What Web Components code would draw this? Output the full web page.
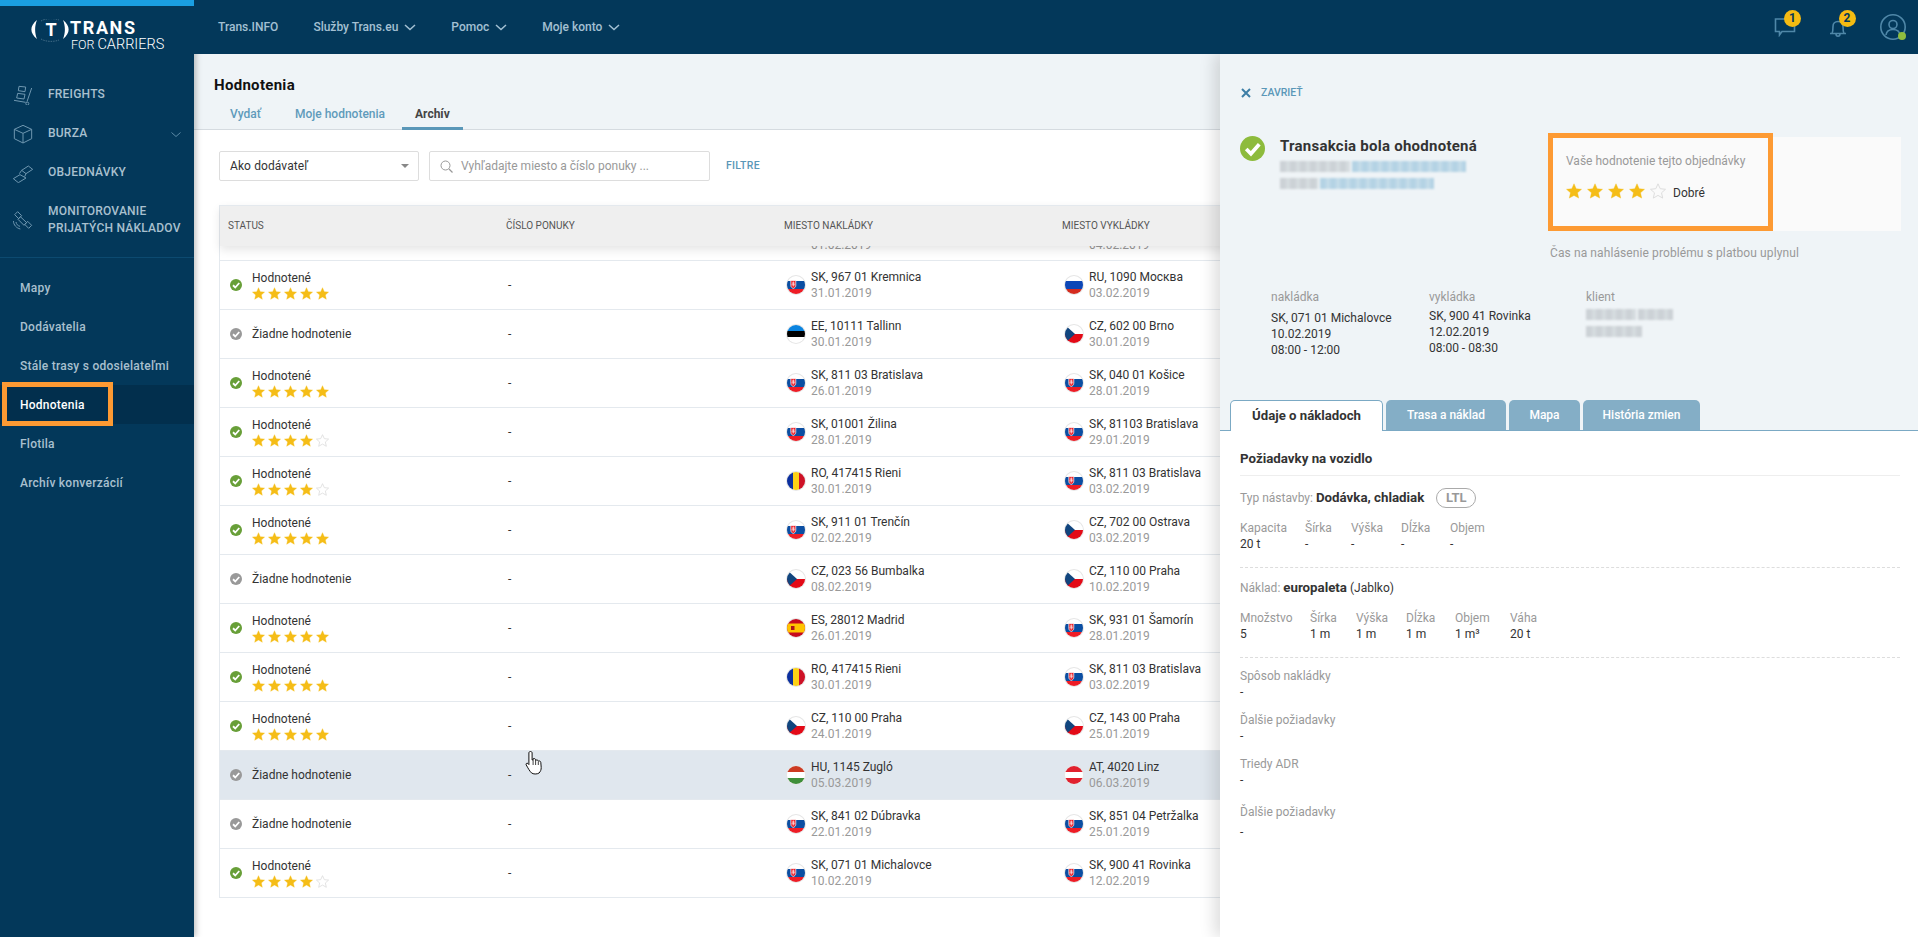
<!DOCTYPE html>
<html lang="sk">
<head>
<meta charset="utf-8">
<title>Hodnotenia</title>
<style>
  html, body { margin: 0; height: 100%; overflow: hidden; background: #fff; }
  body { font: 12px/16px Roboto, "Liberation Sans", sans-serif; color: #333; }
</style>
</head>
<body>
<app-shell>
  <side-nav slot="side"></side-nav>
  <top-bar slot="top"></top-bar>
  <ratings-page slot="main"></ratings-page>
  <detail-panel slot="panel"></detail-panel>
</app-shell>

<script>
const STAR = "M8 .8l2.2 4.9 5.3.6-4 3.5 1.2 5.3L8 12.4l-4.7 2.7 1.2-5.3-4-3.5 5.3-.6z";

class AppShell extends HTMLElement {
  constructor() {
    super();
    this.attachShadow({ mode: "open" });
    this.shadowRoot.innerHTML = `
      <style>
        :host { display: grid; grid-template-columns: 194px 1fr; grid-template-rows: 54px 1fr; height: 100vh; position: relative; overflow: hidden; }
        .side { grid-row: 1 / 3; background: #03385a; position: relative; z-index: 3; box-shadow: 2px 0 6px rgba(0,0,0,.25); }
        .top { grid-column: 2; background: #03385a; position: relative; z-index: 4; }
        .main { grid-column: 2; min-width: 0; overflow: hidden; }
        .panel { position: absolute; top: 54px; right: 0; bottom: 0; width: 698px; z-index: 2; box-shadow: -6px 0 14px rgba(0,0,0,.13); }
        .hand { position: absolute; left: 524px; top: 750px; z-index: 9; }
      </style>
      <div class="side"><slot name="side"></slot></div>
      <div class="top"><slot name="top"></slot></div>
      <div class="main"><slot name="main"></slot></div>
      <div class="panel"><slot name="panel"></slot></div>
      <svg class="hand" width="22" height="25" viewBox="0 0 22 25">
        <path d="M6.5 1.5c1 0 1.600.6 1.600 1.500v7l1-.2V8.800c1.300-.5 2.300-.1 2.500.8l.2.6c1.200-.5 2.200-.1 2.500.9 1.300-.5 2.400.2 2.500 1.300l.4 5c.1 2.400-.8 4.100-2.100 5.600-2 1.400-6 1.300-7.600-.1C5.500 21 4 18 2.200 14.900c-.7-1.200.7-2.300 1.800-1.300l.9 1V3c0-1 .6-1.500 1.600-1.500z" fill="#fff" stroke="#111" stroke-width="1"/>
        <path d="M9.100 10v5M11.600 10v5M14.300 11.500V15" stroke="#111" stroke-width=".8" fill="none"/>
      </svg>
    `;
  }
}

class BrandLogo extends HTMLElement {
  constructor() {
    super();
    this.attachShadow({ mode: "open" });
    this.shadowRoot.innerHTML = `
      <style>
        :host { display: flex; align-items: flex-start; height: 69px; padding: 13px 0 0 31px; box-sizing: border-box; color: #fff; }
        svg { flex: none; }
        .trans { font: 700 18px/18px Roboto, sans-serif; letter-spacing: 1.600px; }
        .sub { display: flex; align-items: baseline; margin: -1px 0 0 1px; font: 300 14.500px/18px Roboto, sans-serif; gap: 3px; }
        .sub span { font-size: 12.500px; }
      </style>
      <svg width="39" height="24" viewBox="0 0 39 24">
        <path d="M6 1C-1.500 7-1.500 14 6 20 3.500 14 3.500 7 6 1zM32 1c7.500 6 7.500 13 0 19 2.500-6 2.500-13 0-19z" fill="#fff"/>
        <path d="M10 2c5-3 13-3 18-1M10 20c5 3 13 3 18 1" fill="none" stroke="#7f9db0" stroke-width=".5" stroke-dasharray="1.500 1"/>
        <text x="20" y="16.500" text-anchor="middle" fill="#fff" font-family="Roboto, sans-serif" font-weight="700" font-size="18">T</text>
      </svg>
      <div class="words">
        <div class="trans">TRANS</div>
        <div class="sub"><span>FOR</span>CARRIERS</div>
      </div>
    `;
  }
}

class NavIcon extends HTMLElement {
  static get shapes() {
    return {
      freights: `<path d="M56 9L42 50M3 46l35 6"/><circle cx="43" cy="56" r="4.500"/><path d="M18 4l20 2-2 14-20-3zM14 25l22 3-3 14-22-3z"/>`,
      box: `<path d="M30 4l26 12v28L30 57 4 44V16zM4 16l26 12 26-12M30 28v29"/>`,
      deal: `<path d="M26 22L46 9l13 10-20 13zM1 47l20-12 18 10-23 14zM26 22l-7 10M39 32l-4 9"/>`,
      sat: `<path d="M14 5L5 14l12 12 9-9zM44 34l-9 9 12 12 9-9zM22 20l-7 8 18 18 8-8zM1 33c1 12 9 21 21 24M9 36c1 7 5 11 12 13"/>`
    };
  }
  constructor() {
    super();
    this.attachShadow({ mode: "open" });
    this.shadowRoot.innerHTML = `
      <style>
        :host { display: block; width: 20px; height: 20px; }
        svg { display: block; fill: none; stroke: #6f97b0; stroke-width: 3; stroke-linejoin: round; }
      </style>
      <svg width="20" height="20" viewBox="0 0 60 60">${NavIcon.shapes[this.getAttribute("name")]}</svg>
    `;
  }
}

class NavMain extends HTMLElement {
  constructor() {
    super();
    this.attachShadow({ mode: "open" });
    const chevron = this.hasAttribute("chevron")
      ? `<svg class="chev" width="10" height="6" viewBox="0 0 10 6"><path d="M.5.5L5 4.500 9.500.5" fill="none" stroke="#5c8aa6"/></svg>`
      : "";
    this.shadowRoot.innerHTML = `
      <style>
        :host { display: flex; align-items: center; min-height: 39px; padding-left: 13px; gap: 15px; position: relative;
          font-weight: 500; font-size: 12px; line-height: 17px; color: #a9c0cf; letter-spacing: .22px; }
        .chev { position: absolute; right: 13px; top: 18px; }
      </style>
      <nav-icon name="${this.getAttribute("icon")}"></nav-icon>
      <div><slot></slot></div>
      ${chevron}
    `;
  }
}

class NavSub extends HTMLElement {
  constructor() {
    super();
    this.attachShadow({ mode: "open" });
    this.shadowRoot.innerHTML = `
      <style>
        :host { display: flex; align-items: center; height: 39px; padding-left: 20px; position: relative;
          font-weight: 500; font-size: 12px; color: #a9c0cf; letter-spacing: .25px; }
        :host([active]) { background: #022f4d; color: #fff; }
        .mark { display: none; position: absolute; left: 2px; top: -3px; width: 111px; height: 44px; box-sizing: border-box; border: 5px solid #fd9a33; }
        :host([active]) .mark { display: block; }
      </style>
      <slot></slot><div class="mark"></div>
    `;
  }
}

class SideNav extends HTMLElement {
  constructor() {
    super();
    this.attachShadow({ mode: "open" });
    this.shadowRoot.innerHTML = `
      <style>
        :host { display: block; }
        .strip { height: 6px; background: #1a9fe2; }
        .group { border-bottom: 1px solid #0c4a70; padding-bottom: 10px; }
        .subs { padding-top: 10px; }
        nav-main.tall { min-height: 55px; }
      </style>
      <div class="strip"></div>
      <brand-logo></brand-logo>
      <div class="group">
        <nav-main icon="freights">FREIGHTS</nav-main>
        <nav-main icon="box" chevron>BURZA</nav-main>
        <nav-main icon="deal">OBJEDNÁVKY</nav-main>
        <nav-main icon="sat" class="tall">MONITOROVANIE<br>PRIJATÝCH NÁKLADOV</nav-main>
      </div>
      <div class="subs">
        <nav-sub>Mapy</nav-sub>
        <nav-sub>Dodávatelia</nav-sub>
        <nav-sub>Stále trasy s odosielateľmi</nav-sub>
        <nav-sub active>Hodnotenia</nav-sub>
        <nav-sub>Flotila</nav-sub>
        <nav-sub>Archív konverzácií</nav-sub>
      </div>
    `;
  }
}

class TopBar extends HTMLElement {
  constructor() {
    super();
    this.attachShadow({ mode: "open" });
    const chev = `<svg width="12" height="7" viewBox="0 0 12 7"><path d="M1 1l5 4.500L11 1" fill="none" stroke="#a3c0d3" stroke-width="1.500"/></svg>`;
    this.shadowRoot.innerHTML = `
      <style>
        :host { display: flex; align-items: center; height: 54px; padding-left: 24px; color: #a3c0d3; font-weight: 500; font-size: 12px; }
        .links { display: flex; gap: 35px; flex: 1; }
        .links span { display: flex; align-items: center; gap: 6px; }
        .tools { display: flex; align-items: center; }
        .tool { position: relative; display: block; }
        .badge { position: absolute; width: 17px; height: 17px; border-radius: 50%; background: #f5bb12; color: #03385a; font: 700 12px/17px Roboto, sans-serif; text-align: center; }
        svg.i { display: block; fill: none; stroke: #4f87a8; stroke-width: 1.600; }
        .dot { position: absolute; width: 8px; height: 8px; border-radius: 50%; background: #8fbc3f; right: 0; bottom: 0; }
      </style>
      <div class="links">
        <span>Trans.INFO</span>
        <span>Služby Trans.eu ${chev}</span>
        <span>Pomoc ${chev}</span>
        <span>Moje konto ${chev}</span>
      </div>
      <div class="tools">
        <div class="tool" style="margin-right:33px">
          <svg class="i" width="22" height="20" viewBox="0 0 22 20"><path d="M1.500 2h19v12.500H8L5.500 18v-3.500h-4z"/></svg>
          <div class="badge" style="left:10px;top:-7px">1</div>
        </div>
        <div class="tool" style="margin-right:33px">
          <svg class="i" width="18" height="21" viewBox="0 0 18 21"><path d="M1 16.500h16M3 16.500c1-2 1-4 1-7 0-3 2-5 5-5s5 2 5 5c0 3 0 5 1 7M7 17c0 3 4 3 4 0"/></svg>
          <div class="badge" style="left:9.500px;top:-7px">2</div>
        </div>
        <div class="tool" style="margin-right:12px">
          <svg class="i" width="26" height="26" viewBox="0 0 26 26"><circle cx="13" cy="13" r="12.200"/><circle cx="13" cy="10.500" r="4"/><path d="M6 21c.5-4 3-5.500 7-5.500s6.500 1.500 7 5.500"/></svg>
          <div class="dot"></div>
        </div>
      </div>
    `;
  }
}

class StarRating extends HTMLElement {
  constructor() {
    super();
    this.attachShadow({ mode: "open" });
    const value = Number(this.getAttribute("value"));
    const size = Number(this.getAttribute("size") || 13);
    const gap = Number(this.getAttribute("gap") || 3);
    let html = "";
    for (let i = 0; i < 5; i++) {
      const on = i < value;
      html += `<svg width="${size}" height="${size}" viewBox="0 0 16 16"><path d="${STAR}" fill="${on ? "#f5bd17" : "none"}" stroke="${on ? "#f5bd17" : "#ddd"}" stroke-width="${on ? .4 : 1}"/></svg>`;
    }
    this.shadowRoot.innerHTML = `
      <style>
        :host { display: inline-flex; gap: ${gap}px; }
        svg { display: block; }
      </style>
      ${html}
    `;
  }
}

class CheckBadge extends HTMLElement {
  constructor() {
    super();
    this.attachShadow({ mode: "open" });
    const size = this.getAttribute("size") || 12;
    const color = this.getAttribute("color") || "#689f38";
    this.shadowRoot.innerHTML = `
      <style>:host { display: block; flex: none; } svg { display: block; }</style>
      <svg width="${size}" height="${size}" viewBox="0 0 24 24"><circle cx="12" cy="12" r="12" fill="${color}"/><path d="M6 12.500l4.500 4.500L18.500 8" fill="none" stroke="#fff" stroke-width="3.600"/></svg>
    `;
  }
}

class FlagIcon extends HTMLElement {
  static get art() {
    const h = (a, b, c, t = 7, m = 6) => `<rect width="20" height="${t}" fill="${a}"/><rect y="${t}" width="20" height="${m}" fill="${b}"/><rect y="${t + m}" width="20" height="${20 - t - m}" fill="${c}"/>`;
    return {
      SK: h("#fff", "#0b4ea2", "#ee1c25", 6, 8) + `<path d="M4.800 5.500h5v4.800c0 1.800-1.200 2.600-2.500 3.200-1.300-.6-2.500-1.400-2.500-3.200z" fill="#ee1c25" stroke="#fff" stroke-width=".7"/><path d="M7.300 6.500v5M5.900 8.100h2.800M5.500 9.800h3.600" stroke="#fff" stroke-width=".7"/>`,
      RU: h("#fff", "#0c47b7", "#d52b1e", 6, 8),
      EE: h("#0a84e0", "#000", "#fff"),
      HU: h("#cd3a22", "#fff", "#3f8f3a"),
      AT: h("#e1212e", "#fff", "#e1212e"),
      CZ: `<rect width="20" height="10" fill="#fff"/><rect y="10" width="20" height="10" fill="#e30a17"/><path d="M0 0l11 10L0 20z" fill="#11457e"/>`,
      RO: `<rect width="7" height="20" fill="#0b2f9e"/><rect x="7" width="6" height="20" fill="#fcd116"/><rect x="13" width="7" height="20" fill="#ce1126"/>`,
      ES: `<rect width="20" height="20" fill="#c60b1e"/><rect y="5.500" width="20" height="9" fill="#ffc400"/><rect x="5" y="8" width="3.500" height="4" fill="#ad1519"/>`
    };
  }
  constructor() {
    super();
    this.attachShadow({ mode: "open" });
    this.shadowRoot.innerHTML = `
      <style>:host { display: block; flex: none; width: 20px; height: 20px; } svg { display: block; }</style>
      <svg width="20" height="20" viewBox="0 0 20 20">
        <defs><clipPath id="c"><circle cx="10" cy="10" r="9"/></clipPath></defs>
        <circle cx="10" cy="10" r="10" fill="#e6e6e6"/>
        <g clip-path="url(#c)">${FlagIcon.art[this.getAttribute("code")]}</g>
      </svg>
    `;
  }
}

class PlaceCell extends HTMLElement {
  constructor() {
    super();
    this.attachShadow({ mode: "open" });
    const place = this.getAttribute("place");
    this.shadowRoot.innerHTML = `
      <style>
        :host { display: flex; align-items: center; gap: 5px; padding-left: 10px; }
        .place { color: #333; white-space: nowrap; }
        .date { color: #999; letter-spacing: .05px; }
      </style>
      <flag-icon code="${place.slice(0, 2)}"></flag-icon>
      <div><div class="place">${place}</div><div class="date">${this.getAttribute("date")}</div></div>
    `;
  }
}

class RatingRow extends HTMLElement {
  constructor() {
    super();
    this.attachShadow({ mode: "open" });
    const stars = Number(this.getAttribute("stars") || 0);
    const label = stars
      ? `<div class="lbl">Hodnotené</div><star-rating value="${stars}"></star-rating>`
      : `<div class="lbl">Žiadne hodnotenie</div>`;
    this.shadowRoot.innerHTML = `
      <style>
        :host { display: grid; grid-template-columns: 278px 278px 278px 1fr; height: 48px; border-bottom: 1px solid #e4e9ee; align-items: center; background: #fff; }
        :host([hover]) { background: #e0e7ee; }
        .status { display: flex; align-items: center; gap: 10px; padding-left: 10px; }
        .lbl { color: #333; }
        star-rating { display: flex; margin-top: 1px; }
        .num { padding-left: 10px; }
      </style>
      <div class="status"><check-badge color="${stars ? "#689f38" : "#999"}"></check-badge><div>${label}</div></div>
      <div class="num">-</div>
      <place-cell place="${this.getAttribute("from")}" date="${this.getAttribute("from-date")}"></place-cell>
      <place-cell place="${this.getAttribute("to")}" date="${this.getAttribute("to-date")}"></place-cell>
    `;
  }
}

const ROWS = [
  [5, "SK, 967 01 Kremnica", "31.01.2019", "RU, 1090 Москва", "03.02.2019"],
  [0, "EE, 10111 Tallinn", "30.01.2019", "CZ, 602 00 Brno", "30.01.2019"],
  [5, "SK, 811 03 Bratislava", "26.01.2019", "SK, 040 01 Košice", "28.01.2019"],
  [4, "SK, 01001 Žilina", "28.01.2019", "SK, 81103 Bratislava", "29.01.2019"],
  [4, "RO, 417415 Rieni", "30.01.2019", "SK, 811 03 Bratislava", "03.02.2019"],
  [5, "SK, 911 01 Trenčín", "02.02.2019", "CZ, 702 00 Ostrava", "03.02.2019"],
  [0, "CZ, 023 56 Bumbalka", "08.02.2019", "CZ, 110 00 Praha", "10.02.2019"],
  [5, "ES, 28012 Madrid", "26.01.2019", "SK, 931 01 Šamorín", "28.01.2019"],
  [5, "RO, 417415 Rieni", "30.01.2019", "SK, 811 03 Bratislava", "03.02.2019"],
  [5, "CZ, 110 00 Praha", "24.01.2019", "CZ, 143 00 Praha", "25.01.2019"],
  [0, "HU, 1145 Zugló", "05.03.2019", "AT, 4020 Linz", "06.03.2019", true],
  [0, "SK, 841 02 Dúbravka", "22.01.2019", "SK, 851 04 Petržalka", "25.01.2019"],
  [4, "SK, 071 01 Michalovce", "10.02.2019", "SK, 900 41 Rovinka", "12.02.2019"]
];

class RatingTable extends HTMLElement {
  constructor() {
    super();
    this.attachShadow({ mode: "open" });
    const rows = ROWS.map((r) => `<rating-row stars="${r[0]}" from="${r[1]}" from-date="${r[2]}" to="${r[3]}" to-date="${r[4]}"${r[5] ? " hover" : ""}></rating-row>`).join("");
    this.shadowRoot.innerHTML = `
      <style>
        :host { display: block; border-left: 1px solid #e4e9ee; }
        .head { display: grid; grid-template-columns: 278px 278px 278px 1fr; align-items: center; height: 40px; border-top: 1px solid #e4e9ee; background: #efefef;
          font-size: 10px; color: #555; position: relative; z-index: 1; box-shadow: 0 4px 9px rgba(0,0,0,.1); }
        .head div { padding-left: 8px; }
        .peek { display: grid; grid-template-columns: 556px 278px 1fr; height: 14px; overflow: hidden; border-bottom: 1px solid #e4e9ee; color: #999; line-height: 16px; }
        .peek span { display: block; padding-left: 35px; margin-top: -9px; }
      </style>
      <div class="head"><div>STATUS</div><div>ČÍSLO PONUKY</div><div>MIESTO NAKLÁDKY</div><div>MIESTO VYKLÁDKY</div></div>
      <div class="peek"><i></i><span>01.02.2019</span><span>04.02.2019</span></div>
      ${rows}
    `;
  }
}

class RatingsPage extends HTMLElement {
  constructor() {
    super();
    this.attachShadow({ mode: "open" });
    this.shadowRoot.innerHTML = `
      <style>
        :host { display: block; }
        .head { height: 76px; box-sizing: border-box; padding: 23px 0 0 20px; background: #eff4f7; border-bottom: 1px solid #d5dbe0; }
        h1 { margin: 0; font: 700 15px/16px Roboto, sans-serif; color: #111; letter-spacing: .3px; }
        .tabs { display: flex; gap: 6px; margin: 13px 0 0 3px; }
        .tabs span { padding: 0 13px; height: 24px; box-sizing: border-box; color: #5f9bbb; font-weight: 500; }
        .tabs .me { margin: 0 -2px 0 2px; }
        .tabs .on { color: #444; font-weight: 700; border-bottom: 3px solid #5a97b8; }
        .body { padding: 21px 0 0 25px; }
        .filters { display: flex; align-items: center; gap: 10px; margin-bottom: 24px; }
        .box { height: 30px; box-sizing: border-box; background: #fff; border: 1px solid #ddd; border-radius: 2px; display: flex; align-items: center; }
        .sel { width: 200px; padding: 0 8px 0 10px; justify-content: space-between; color: #333; letter-spacing: .1px; }
        .caret { width: 0; height: 0; border: 4px solid transparent; border-top: 4px solid #888; border-bottom: 0; border-left-width: 4.500px; border-right-width: 4.500px; margin-right: 1px; }
        .search { width: 281px; padding-left: 10px; gap: 8px; color: #999; }
        .flt { margin-left: 6px; color: #5a97b8; font-size: 10.500px; font-weight: 500; letter-spacing: .3px; }
      </style>
      <div class="head">
        <h1>Hodnotenia</h1>
        <div class="tabs"><span>Vydať</span><span class="me">Moje hodnotenia</span><span class="on">Archív</span></div>
      </div>
      <div class="body">
        <div class="filters">
          <div class="box sel">Ako dodávateľ<div class="caret"></div></div>
          <div class="box search">
            <svg width="13" height="13" viewBox="0 0 13 13"><circle cx="5.500" cy="5.500" r="4.500" fill="none" stroke="#999"/><path d="M9 9l3.500 3.500" stroke="#999" stroke-width="1.300"/></svg>
            Vyhľadajte miesto a číslo ponuky ...
          </div>
          <div class="flt">FILTRE</div>
        </div>
        <rating-table></rating-table>
      </div>
    `;
  }
}

class BlurText extends HTMLElement {
  // mosaic stand-in for the redacted values; parts = "width:colour ..."
  constructor() {
    super();
    this.attachShadow({ mode: "open" });
    const parts = this.getAttribute("parts").split(" ").map((p) => {
      const [w, c] = p.split(":");
      return `<i style="width:${w}px;background:repeating-linear-gradient(90deg,${c} 0 6px,${c}bb 6px 10px)"></i>`;
    }).join("");
    this.shadowRoot.innerHTML = `
      <style>
        :host { display: flex; gap: 2px; height: 11px; margin-bottom: 6px; filter: blur(1.200px); }
        i { display: block; height: 100%; }
      </style>
      ${parts}
    `;
  }
}

class SpecGrid extends HTMLElement {
  constructor() {
    super();
    this.attachShadow({ mode: "open" });
    const labels = this.getAttribute("labels").split("|");
    const values = this.getAttribute("values").split("|");
    const cells = labels.map((l) => `<div class="l">${l}</div>`).join("") + values.map((v) => `<div>${v}</div>`).join("");
    this.shadowRoot.innerHTML = `
      <style>
        :host { display: grid; grid-template-columns: ${this.getAttribute("cols")}; color: #333; }
        .l { color: #999; }
      </style>
      ${cells}
    `;
  }
}

class DetailField extends HTMLElement {
  constructor() {
    super();
    this.attachShadow({ mode: "open" });
    this.shadowRoot.innerHTML = `
      <style>
        :host { display: block; color: #333; }
        .l { color: #999; }
        .v { margin-top: var(--gap, 0); }
      </style>
      <div class="l">${this.getAttribute("label")}</div><div class="v">-</div>
    `;
  }
}

class DetailPanel extends HTMLElement {
  constructor() {
    super();
    this.attachShadow({ mode: "open" });
    this.shadowRoot.innerHTML = `
      <style>
        :host { display: flex; flex-direction: column; height: 100%; background: #fff; }
        .top { height: 346px; box-sizing: border-box; background: #eff4f7; position: relative; padding-top: 31px; flex: none; }
        .close { display: flex; align-items: center; gap: 10px; margin-left: 21px; height: 16px; color: #5a97b8; font-size: 10.500px; font-weight: 500; }
        .summary { display: grid; grid-template-columns: 332px 349px; margin-top: 36px; height: 94px; }
        .who { display: flex; gap: 15px; padding-left: 20px; align-items: flex-start; }
        .who h2 { margin: 1px 0 7px; font: 700 15px/16px Roboto, sans-serif; color: #333; letter-spacing: .25px; }
        .who check-badge { margin-top: -1px; }
        .rate { background: #fafafa; padding: 16px 0 0 14px; color: #999; }
        .rate-row { display: flex; align-items: center; gap: 7px; margin-top: 12px; color: #333; }
        .rate-row span { margin-top: 4px; }
        .mark { position: absolute; left: 328px; top: 79px; width: 225px; height: 98px; box-sizing: border-box; border: 5px solid #fd9a33; }
        .note { margin: 14px 0 0 330px; color: #999; letter-spacing: .1px; }
        .cols { display: grid; grid-template-columns: 158px 157px 1fr; padding-left: 51px; margin-top: 28px; color: #333; }
        .cols .l { color: #999; margin-bottom: 5px; }
        .cols .up .l { margin-bottom: 3px; }
        .cols .client .l { margin-bottom: 4px; }
        .tabs { display: flex; gap: 3px; height: 31px; padding-left: 10px; border-bottom: 1px solid #7ba9c4; box-sizing: border-box; flex: none; background: #eff4f7; }
        .tabs span { height: 30px; line-height: 30px; border-radius: 5px 5px 0 0; background: #84aec6; color: #fff; font-weight: 500; text-align: center; }
        .tabs .on { height: 31px; background: #fff; color: #333; font-size: 13.200px; font-weight: 700; border: 1px solid #7ba9c4; border-bottom: 0; box-sizing: border-box; }
        .body { padding: 20px 18px 0 20px; color: #333; }
        h3 { margin: 0; font: 700 13.300px/16px Roboto, sans-serif; color: #333; padding-bottom: 8px; border-bottom: 1px solid #eee; }
        .line { display: flex; align-items: center; height: 16px; color: #999; }
        .line b { color: #333; font-size: 13.300px; font-weight: 700; }
        .line em { color: #333; font-style: normal; }
        .pill { border: 1px solid #aaa; border-radius: 10px; height: 18px; width: 38px; line-height: 18px; text-align: center; margin-left: 12px; font-size: 13px; font-weight: 700; color: #999; }
        hr { border: 0; border-top: 1px dashed #ddd; margin: 15px 0 0; }
      </style>
      <div class="top">
        <div class="close">
          <svg width="10" height="10" viewBox="0 0 10 10"><path d="M1 1l8 8M9 1l-8 8" stroke="#3d7ea6" stroke-width="2"/></svg>
          ZAVRIEŤ
        </div>
        <div class="summary">
          <div class="who">
            <check-badge size="25" color="#8dbb3c"></check-badge>
            <div>
              <h2>Transakcia bola ohodnotená</h2>
              <blur-text parts="70:#ccd2d6 114:#b4d3e4"></blur-text>
              <blur-text parts="38:#ccd2d6 114:#b4d3e4"></blur-text>
            </div>
          </div>
          <div class="rate">
            Vaše hodnotenie tejto objednávky
            <div class="rate-row"><star-rating value="4" size="16" gap="5"></star-rating><span>Dobré</span></div>
          </div>
        </div>
        <div class="mark"></div>
        <div class="note">Čas na nahlásenie problému s platbou uplynul</div>
        <div class="cols">
          <div><div class="l">nakládka</div>SK, 071 01 Michalovce<br>10.02.2019<br>08:00 - 12:00</div>
          <div class="up"><div class="l">vykládka</div>SK, 900 41 Rovinka<br>12.02.2019<br>08:00 - 08:30</div>
          <div class="up client"><div class="l">klient</div><blur-text parts="50:#ccd2d6 35:#ccd2d6"></blur-text><blur-text parts="56:#ccd2d6"></blur-text></div>
        </div>
      </div>
      <div class="tabs">
        <span class="on" style="width:153px">Údaje o nákladoch</span>
        <span style="width:120px">Trasa a náklad</span>
        <span style="width:71px">Mapa</span>
        <span style="width:117px">História zmien</span>
      </div>
      <div class="body">
        <h3>Požiadavky na vozidlo</h3>
        <div class="line" style="margin-top:14px"><span>Typ nástavby:&nbsp;</span><b>Dodávka, chladiak</b><span class="pill">LTL</span></div>
        <spec-grid style="margin-top:14px" cols="65px 46px 50px 49px 1fr" labels="Kapacita|Šírka|Výška|Dĺžka|Objem" values="20 t|-|-|-|-"></spec-grid>
        <hr>
        <div class="line" style="margin-top:12px"><span>Náklad:&nbsp;</span><b>europaleta</b><em>&nbsp;(Jablko)</em></div>
        <spec-grid style="margin-top:14px" cols="70px 46px 50px 49px 55px 1fr" labels="Množstvo|Šírka|Výška|Dĺžka|Objem|Váha" values="5|1 m|1 m|1 m|1 m³|20 t"></spec-grid>
        <hr>
        <detail-field style="margin-top:10px" label="Spôsob nakládky"></detail-field>
        <detail-field style="margin-top:12px" label="Ďalšie požiadavky"></detail-field>
        <detail-field style="margin-top:12px" label="Triedy ADR"></detail-field>
        <detail-field style="margin-top:16px;--gap:4px" label="Ďalšie požiadavky"></detail-field>
      </div>
    `;
  }
}

customElements.define("nav-icon", NavIcon);
customElements.define("brand-logo", BrandLogo);
customElements.define("nav-main", NavMain);
customElements.define("nav-sub", NavSub);
customElements.define("side-nav", SideNav);
customElements.define("top-bar", TopBar);
customElements.define("star-rating", StarRating);
customElements.define("check-badge", CheckBadge);
customElements.define("flag-icon", FlagIcon);
customElements.define("place-cell", PlaceCell);
customElements.define("rating-row", RatingRow);
customElements.define("rating-table", RatingTable);
customElements.define("ratings-page", RatingsPage);
customElements.define("blur-text", BlurText);
customElements.define("spec-grid", SpecGrid);
customElements.define("detail-field", DetailField);
customElements.define("detail-panel", DetailPanel);
customElements.define("app-shell", AppShell);
</script>
</body>
</html>
